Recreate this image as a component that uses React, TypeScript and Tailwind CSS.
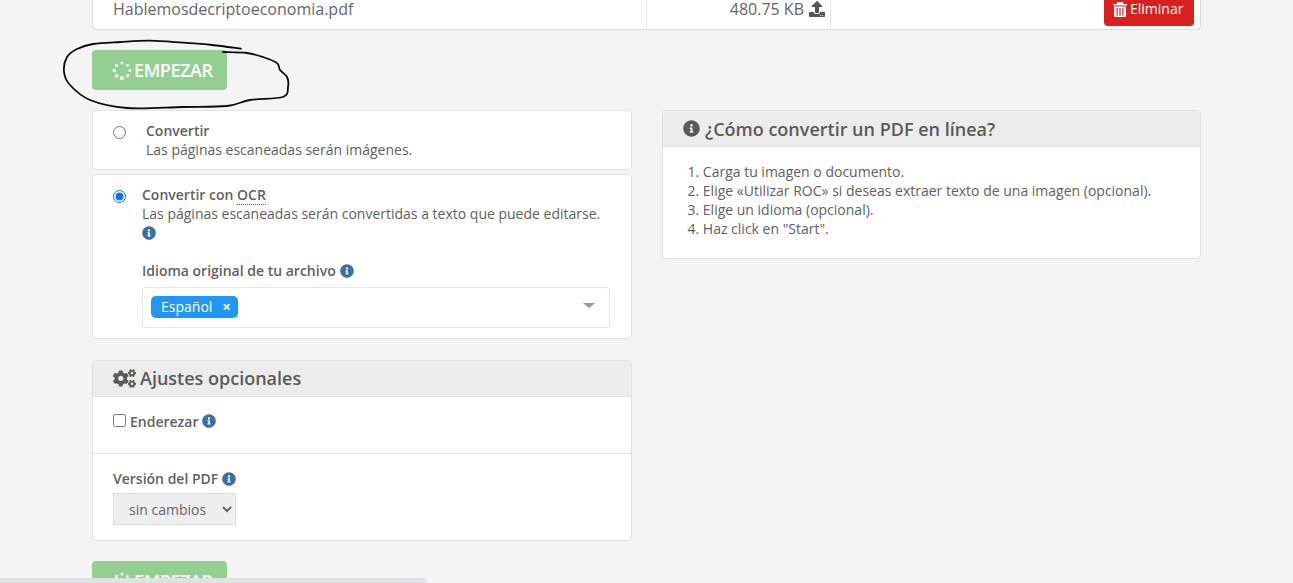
import { FaCogs, FaInfoCircle, FaUpload } from "react-icons/fa";

const dots: [number, number, number][] = [
  [10, 2, 1.5], [15.6, 4.4, 1.3], [18, 9.4, 1.5], [15.6, 14.6, 1.7], [10, 17, 2], [4.6, 14.8, 1.9], [2.2, 9.6, 1.8], [4.4, 4.4, 1.6],
];

const scribble: [number, number][] = [
  [181, 10.7], [152, 7], [123, 4.7], [90, 2.7], [60, 4], [33, 6], [17, 11], [7, 19], [4, 34], [10, 47], [30, 62], [67, 70], [123, 69], [167, 68], [190, 62], [223, 59], [228, 49], [227, 39], [220, 32], [217, 25], [203, 19], [187, 15], [163, 14],
];

function smoothPath(points: [number, number][]) {
  let d = `M${points[0][0]} ${points[0][1]}`;
  for (let i = 0; i < points.length - 1; i++) {
    const p0 = points[Math.max(i - 1, 0)];
    const p1 = points[i];
    const p2 = points[i + 1];
    const p3 = points[Math.min(i + 2, points.length - 1)];
    d += ` C${p1[0] + (p2[0] - p0[0]) / 6} ${p1[1] + (p2[1] - p0[1]) / 6} ${p2[0] - (p3[0] - p1[0]) / 6} ${p2[1] - (p3[1] - p1[1]) / 6} ${p2[0]} ${p2[1]}`;
  }
  return d;
}

function Spinner() {
  return (
    <svg width="20" height="19" viewBox="0 0 20 19" className="shrink-0" fill="#fff">
      {dots.map(([x, y, r]) => (
        <circle key={`${x}-${y}`} cx={x} cy={y} r={r} />
      ))}
    </svg>
  );
}

function Trash() {
  return (
    <svg width="14" height="15" viewBox="0 0 14 15" className="mt-[2px] shrink-0" fill="#fff">
      <path d="M4.5 0h5l1 2H14v1.6H0V2h3.5z" />
      <path fillRule="evenodd" d="M1 4.6h12V13.5a1.5 1.5 0 0 1-1.5 1.5h-9A1.5 1.5 0 0 1 1 13.5z M3.5 6v7.5h1.2V6z M6.4 6v7.5h1.2V6z M9.3 6v7.5h1.2V6z" />
    </svg>
  );
}

function Start({ className = "" }: { className?: string }) {
  return (
    <button className={`flex h-10 w-[135px] shrink-0 items-center justify-start gap-[2px] rounded bg-[#93cf92] pl-5 text-lg font-semibold tracking-[-0.4px] text-white ${className}`}>
      <Spinner />
      EMPEZAR
    </button>
  );
}

function Info({ className = "" }: { className?: string }) {
  return <FaInfoCircle className={`inline-block text-[14px] text-[#3a6db0] ${className}`} />;
}

export default function App() {
  return (
    <div className="relative h-[583px] overflow-hidden bg-[#f4f4f4] pl-[92px] text-[#5f5f5f] [font-family:'Open_Sans',sans-serif]">
      <div className="flex h-[30px] w-[1109px] rounded-b border-x border-b border-[#dedede] bg-white">
        <div className="w-[553px] pl-5 text-base leading-[18px] text-[#666]">Hablemosdecriptoeconomia.pdf</div>
        <div className="flex w-[185px] justify-end gap-[5px] border-x border-[#e6e6e6] pr-[5px] text-base leading-[18px] text-[#666]">
          480.75 KB
          <FaUpload className="mt-px text-[16px] text-[#555]" />
        </div>
        <div className="flex flex-1 justify-end pr-[6px]">
          <div className="flex h-[26px] w-[90px] items-start justify-start gap-[3px] rounded-b bg-[#da1f1f] pl-[9px] text-sm leading-[18px] text-white">
            <Trash />
            Eliminar
          </div>
        </div>
      </div>

      <Start className="mt-5" />

      <div className="mt-5 flex w-[1109px] items-start gap-[30px]">
        <div className="w-[540px]">
          <div className="flex h-[60px] rounded border border-[#e2e2e2] bg-white pl-5 pt-[10px] text-sm leading-[19px]">
            <input type="radio" name="mode" className="mt-[5px] h-[13px] w-[13px]" />
            <div className="ml-[20px]">
              <div className="font-semibold">Convertir</div>
              <div>Las páginas escaneadas serán imágenes.</div>
            </div>
          </div>

          <div className="mt-1 flex h-[165px] rounded border border-[#e2e2e2] bg-white pl-5 pt-[10px] text-sm leading-[19px]">
            <input type="radio" name="mode" defaultChecked className="mt-[5px] h-[13px] w-[13px]" />
            <div className="ml-4 w-[468px]">
              <div className="font-semibold">
                Convertir con <span className="border-b border-dotted border-[#555]">OCR</span>
              </div>
              <div>Las páginas escaneadas serán convertidas a texto que puede editarse.</div>
              <div className="flex h-[19px] items-center"><Info /></div>
              <div className="mt-[19px] flex items-center gap-1 font-semibold">
                Idioma original de tu archivo <Info />
              </div>
              <div className="relative mt-[7px] flex h-[41px] items-center rounded border border-[#e6e6e6] px-2">
                <span className="-mt-[2px] flex h-[22px] w-[87px] items-center rounded-[5px] bg-[#2196f3] pl-[10px] text-sm text-white">
                  Español
                  <span className="ml-[10px] text-[15px] font-bold leading-none">×</span>
                </span>
                <span className="absolute right-[14px] top-[15px] h-0 w-0 border-x-[6px] border-t-[5px] border-x-transparent border-t-[#999]" />
              </div>
            </div>
          </div>

          <div className="mt-[21px] h-[181px] rounded border border-[#e2e2e2] bg-white">
            <div className="flex h-[36px] items-center gap-1 rounded-t border-b border-[#e2e2e2] bg-[#ececec] pb-[2px] pl-5 text-lg font-semibold text-[#5a5a5a]">
              <FaCogs className="mt-[2px] text-[23px] text-[#5a5a5a]" />
              Ajustes opcionales
            </div>
            <div className="flex h-[57px] items-start border-b border-[#e2e2e2] pl-5 pt-[15px] text-sm font-semibold leading-[19px]">
              <input type="checkbox" className="mt-[2px] h-[13px] w-[13px]" />
              <span className="ml-1">Enderezar</span>
              <Info className="ml-1 mt-[2px]" />
            </div>
            <div className="pl-5 pt-[15px] text-sm">
              <div className="flex h-[19px] items-center gap-1 font-semibold leading-[19px]">
                Versión del PDF <Info />
              </div>
              <select className="mt-[5px] h-[32px] w-[123px] border border-[#dddddd] bg-[#eeeeee] pl-[11px] text-sm text-[#666]">
                <option>sin cambios</option>
              </select>
            </div>
          </div>

          <Start className="mt-5" />
        </div>

        <div className="h-[149px] w-[539px] rounded border border-[#e2e2e2] bg-white">
          <div className="flex h-[36px] items-center gap-[5px] rounded-t border-b border-[#e2e2e2] bg-[#ececec] pl-5 text-lg font-semibold text-[#5a5a5a]">
            <FaInfoCircle className="text-[17px]" />
            ¿Cómo convertir un PDF en línea?
          </div>
          <ol className="pl-[24.5px] pt-[15px] text-sm leading-[19px]">
            <li>1. Carga tu imagen o documento.</li>
            <li>2. Elige «Utilizar ROC» si deseas extraer texto de una imagen (opcional).</li>
            <li>3. Elige un idioma (opcional).</li>
            <li>4. Haz click en "Start".</li>
          </ol>
        </div>
      </div>

      <svg className="pointer-events-none absolute left-[60px] top-[38px]" width="235" height="76" viewBox="0 0 235 76" fill="none" stroke="#0b0b0b" strokeWidth="1.8" strokeLinecap="round" strokeLinejoin="round">
        <path d={smoothPath(scribble)} />
      </svg>

      <div className="absolute bottom-0 left-0 h-[5px] w-[426px] rounded-tr bg-[#dfe1e5]" />
    </div>
  );
}
